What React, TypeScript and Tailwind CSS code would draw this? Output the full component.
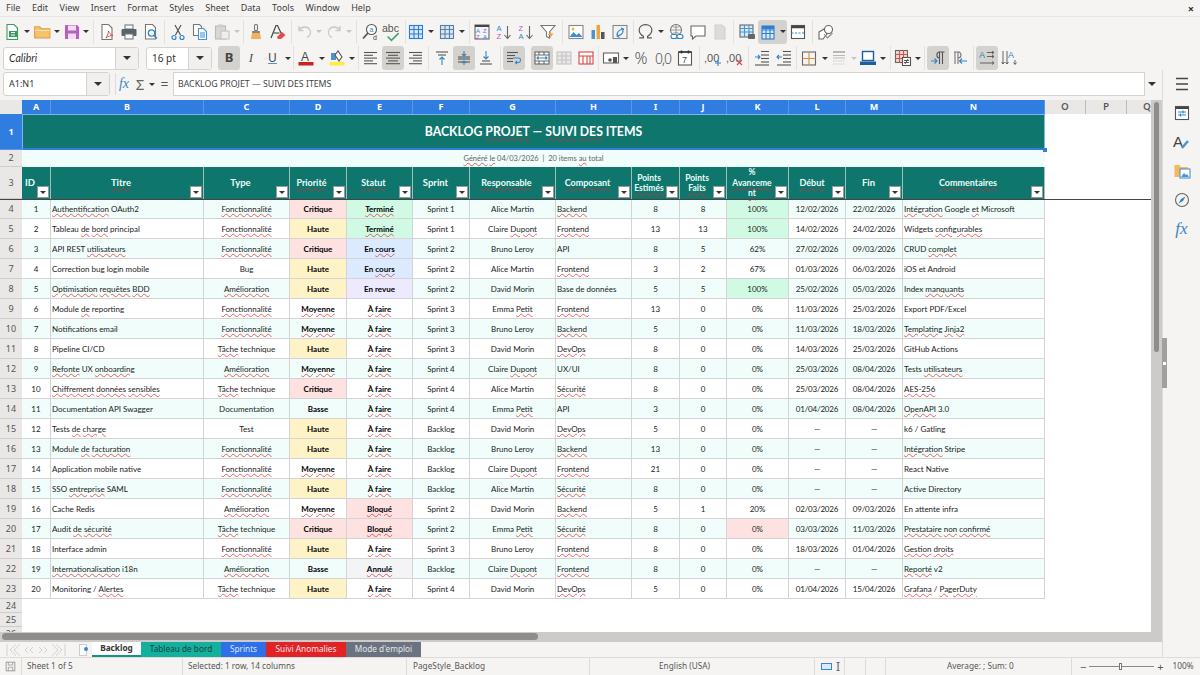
import type { ReactNode } from 'react';

const uiFont = "font-['Noto_Sans','Open_Sans',sans-serif]";
const cellFont = "font-['Lato','Noto_Sans',sans-serif]";

// column template shared by the header and every row
const cols = 'grid-cols-[29px_153px_86px_57px_66px_57px_86px_76px_48px_47px_62px_57px_57px_142px]';

const W = ({ t }: { t: string }) => (
  <span className="underline decoration-wavy decoration-[#e0262b]/70 decoration-[0.75px] [text-underline-offset:0.5px]">{t}</span>
);

// words between *stars* get the red spell-check line
function Sp({ s }: { s: string }) {
  const parts = s.split('*');
  return (
    <>
      {parts.map((p, i) => (i % 2 ? <W key={i} t={p} /> : <span key={i}>{p}</span>))}
    </>
  );
}

type Row = [string, string, string, string, string, string, string, string, string, string, string, string, string];

const F = '*Fonctionnalité*';
const T = '*Tâche* technique';
const A = '*Amélioration*';
const rows: Row[] = [
  ['*Authentification* OAuth2', F, 'Critique', '*Terminé*', 'Sprint 1', 'Alice Martin', '*Backend*', '8', '8', '100%', '12/02/2026', '22/02/2026', '*Intégration* Google *et* Microsoft'],
  ['Tableau *de* *bord* principal', F, 'Haute', '*Terminé*', 'Sprint 1', 'Claire *Dupont*', '*Frontend*', '13', '13', '100%', '14/02/2026', '24/02/2026', 'Widgets *configurables*'],
  ['API REST *utilisateurs*', F, 'Critique', 'En *cours*', 'Sprint 2', 'Bruno Leroy', 'API', '8', '5', '62%', '27/02/2026', '09/03/2026', 'CRUD *complet*'],
  ['Correction bug login mobile', 'Bug', 'Haute', 'En *cours*', 'Sprint 2', 'Alice Martin', '*Frontend*', '3', '2', '67%', '01/03/2026', '06/03/2026', 'iOS et Android'],
  ['*Optimisation* *requêtes* *BDD*', A, 'Haute', 'En revue', 'Sprint 2', 'David Morin', 'Base de données', '5', '5', '100%', '25/02/2026', '05/03/2026', 'Index *manquants*'],
  ['Module *de* reporting', F, '*Moyenne*', '*À* *faire*', 'Sprint 3', 'Emma *Petit*', '*Frontend*', '13', '0', '0%', '11/03/2026', '25/03/2026', 'Export PDF/Excel'],
  ['Notifications email', F, '*Moyenne*', '*À* *faire*', 'Sprint 3', 'Bruno Leroy', '*Backend*', '5', '0', '0%', '11/03/2026', '18/03/2026', '*Templating* *Jinja2*'],
  ['Pipeline CI/CD', T, 'Haute', '*À* *faire*', 'Sprint 3', 'David Morin', '*DevOps*', '8', '0', '0%', '14/03/2026', '25/03/2026', 'GitHub Actions'],
  ['*Refonte* UX *onboarding*', A, '*Moyenne*', '*À* *faire*', 'Sprint 4', 'Claire *Dupont*', 'UX/UI', '8', '0', '0%', '25/03/2026', '08/04/2026', 'Tests *utilisateurs*'],
  ['*Chiffrement* *données* *sensibles*', T, 'Critique', '*À* *faire*', 'Sprint 4', 'Alice Martin', '*Sécurité*', '8', '0', '0%', '25/03/2026', '08/04/2026', '*AES-256*'],
  ['Documentation API Swagger', 'Documentation', 'Basse', '*À* *faire*', 'Sprint 4', 'Emma *Petit*', 'API', '3', '0', '0%', '01/04/2026', '08/04/2026', '*OpenAPI* 3.0'],
  ['Tests *de* *charge*', 'Test', 'Haute', '*À* *faire*', 'Backlog', 'David Morin', '*DevOps*', '5', '0', '0%', '—', '—', 'k6 / Gatling'],
  ['Module *de* *facturation*', F, 'Haute', '*À* *faire*', 'Backlog', 'Bruno Leroy', '*Backend*', '13', '0', '0%', '—', '—', '*Intégration* Stripe'],
  ['Application mobile native', F, '*Moyenne*', '*À* *faire*', 'Backlog', 'Claire *Dupont*', '*Frontend*', '21', '0', '0%', '—', '—', 'React Native'],
  ['SSO *entreprise* SAML', F, 'Haute', '*À* *faire*', 'Backlog', 'Alice Martin', '*Sécurité*', '8', '0', '0%', '—', '—', 'Active Directory'],
  ['Cache Redis', A, '*Moyenne*', '*Bloqué*', 'Sprint 2', 'David Morin', '*Backend*', '5', '1', '20%', '02/03/2026', '09/03/2026', 'En attente infra'],
  ['Audit *de* *sécurité*', T, 'Critique', '*Bloqué*', 'Sprint 2', 'Emma *Petit*', '*Sécurité*', '8', '0', '0%', '03/03/2026', '11/03/2026', '*Prestataire* *non* *confirmé*'],
  ['Interface admin', F, 'Haute', '*À* *faire*', 'Sprint 3', 'Bruno Leroy', '*Frontend*', '8', '0', '0%', '18/03/2026', '01/04/2026', '*Gestion* *droits*'],
  ['*Internationalisation* i18n', A, 'Basse', '*Annulé*', 'Backlog', 'Claire *Dupont*', '*Frontend*', '8', '0', '0%', '—', '—', '*Reporté* v2'],
  ['Monitoring / *Alertes*', T, 'Haute', '*À* *faire*', 'Sprint 4', 'David Morin', '*DevOps*', '5', '0', '0%', '01/04/2026', '15/04/2026', '*Grafana* / *PagerDuty*'],
];

const prioBg: Record<string, string> = {
  Critique: 'bg-[#fee2e2]',
  Haute: 'bg-[#fef3c7]',
};
const statusBg: Record<string, string> = {
  '*Terminé*': 'bg-[#d1fae5]',
  'En *cours*': 'bg-[#dbeafe]',
  'En revue': 'bg-[#ede9fe]',
  '*Bloqué*': 'bg-[#fee2e2]',
  '*Annulé*': 'bg-[#f3f4f6]',
};

function Ic({ children, s = 18 }: { children: ReactNode; s?: number }) {
  return (
    <svg width={s} height={s} viewBox="0 0 18 18" fill="none" strokeWidth="1.1">
      {children}
    </svg>
  );
}

const Slot = ({ c, on, children }: { c: string; on?: boolean; children?: ReactNode }) => (
  <div className={`${c} h-[24px] shrink-0 flex items-center justify-center ${on ? 'bg-[#d4d2ce] rounded-[3px]' : ''}`}>{children}</div>
);
const Drop = ({ c = 'w-[10px]', off }: { c?: string; off?: boolean }) => (
  <div className={`${c} h-[24px] shrink-0 flex items-center justify-center`}>
    <div className={`w-0 h-0 border-x-[3px] border-x-transparent border-t-[3px] ${off ? 'border-t-[#c4c4c4]' : 'border-t-[#333]'}`} />
  </div>
);
const Sep = ({ c = 'w-[5px]' }: { c?: string }) => (
  <div className={`${c} h-[24px] shrink-0 flex justify-center`}>
    <div className="w-px h-full bg-[#e4e2de]" />
  </div>
);

const lines = (xs: [number, number, number][], color: string) =>
  xs.map(([a, b, y], i) => <path key={i} d={`M${a} ${y}H${b}`} stroke={color} />);

const gridIcon = (c: string, fill = 'none') => (
  <Ic>
    <rect x="2.5" y="2.5" width="13" height="13" fill={fill} stroke={c} />
    <path d="M2.5 6.5h13M2.5 11h13M7 2.5v13M11.5 2.5v13" stroke={c} />
  </Ic>
);

function Toolbar1() {
  return (
    <div className="flex h-[29px] items-center pl-[1px]">
      <Slot c="w-[21px]"><Ic><path d="M4 1.5h7l3.5 3.5v11.5H4z" fill="#fff" stroke="#3c9a5f" /><rect x="6" y="8" width="8" height="6" fill="#3c9a5f" /><path d="M8 9.5h4M8 12h4" stroke="#fff" /></Ic></Slot>
      <Drop />
      <Slot c="w-[20px]"><Ic s={19}><path d="M1.5 4.5h5l1.5 2h8v8.5h-14.500z" fill="#f6c26b" stroke="#e0a24a" /><path d="M1.500 8h14.500" stroke="#fbe0ac" /></Ic></Slot>
      <Drop />
      <Slot c="w-[19px]"><Ic><path d="M2 2h12l2 2v12H2z" fill="#b660c4" /><rect x="5" y="2.500" width="8" height="5" fill="#f2dcf5" /><rect x="5" y="10.500" width="8" height="5.500" fill="#f2dcf5" /></Ic></Slot>
      <Drop />
      <Sep />
      <Slot c="w-[22px]"><Ic><path d="M4 1.500h6.500l3.500 3.500v11.500H4z" fill="#fff" stroke="#777" /><path d="M8 15c1.500-3 2.500-5 2.500-7 .5 2 2 3.500 4.500 4.500-2.500 0-5 1-7 2.500z" stroke="#d9463e" strokeWidth=".9" /></Ic></Slot>
      <Slot c="w-[22px]"><Ic><rect x="5" y="2" width="8" height="4" fill="#fff" stroke="#777" /><rect x="1.500" y="6" width="15" height="7" rx="1" fill="#59636b" /><rect x="5" y="11" width="8" height="5" fill="#fff" stroke="#777" /></Ic></Slot>
      <Slot c="w-[22px]"><Ic><path d="M3.500 1.500h7l3 3v11.500h-10z" fill="#fff" stroke="#777" /><circle cx="9.500" cy="10" r="3.200" stroke="#2e86c9" strokeWidth="1.300" /><path d="M12 12.500l3 3" stroke="#2e86c9" strokeWidth="1.500" /></Ic></Slot>
      <Sep />
      <Slot c="w-[22px]"><Ic><path d="M6 2l5.500 10M12 2L6.500 12" stroke="#555" strokeWidth="1.200" /><circle cx="5" cy="14.500" r="2" stroke="#2e86c9" strokeWidth="1.200" /><circle cx="13" cy="14.500" r="2" stroke="#2e86c9" strokeWidth="1.200" /></Ic></Slot>
      <Slot c="w-[22px]"><Ic><path d="M2.500 1.500h6l2 2v9h-8z" fill="#fff" stroke="#777" /><path d="M7.500 5.500h5l3 3v8h-8z" fill="#fff" stroke="#4a95d0" />{lines([[9, 14, 10], [9, 14, 12], [9, 14, 14]], '#4a95d0')}</Ic></Slot>
      <Slot c="w-[22px]"><Ic><rect x="2.500" y="3" width="10" height="13" fill="#d8d8d8" stroke="#bbb" /><rect x="5" y="1.500" width="5" height="3" fill="#ccc" /><rect x="8" y="8" width="8" height="8" fill="#eee" stroke="#c4c4c4" /></Ic></Slot>
      <Drop c="w-[8px]" off />
      <Sep c="w-[4px]" />
      <Slot c="w-[22px]"><Ic><rect x="7.500" y="1.500" width="3" height="6" rx="1" stroke="#777" /><path d="M5 8h8v2H5z" fill="#888" /><path d="M5 10h8l1 6H4z" fill="#f4b15a" /></Ic></Slot>
      <Slot c="w-[22px]"><Ic><path d="M2 15L7 2.500h1.500L13 12" stroke="#444" strokeWidth="1.200" /><path d="M4.500 10h6" stroke="#444" /><path d="M8 14l5-5 3.500 3-4.500 4H9z" fill="#e8484a" /></Ic></Slot>
      <Sep />
      <Slot c="w-[21px]"><Ic><path d="M3 7c3-4 9-4 11 0 1.500 3 0 6-3 7.500M3 3v4.500h4.500" stroke="#c9c9c9" strokeWidth="1.300" /></Ic></Slot>
      <Drop c="w-[8px]" off />
      <Slot c="w-[21px]"><Ic><path d="M15 7c-3-4-9-4-11 0-1.500 3 0 6 3 7.500M15 3v4.500h-4.500" stroke="#c9c9c9" strokeWidth="1.300" /></Ic></Slot>
      <Drop off />
      <Sep />
      <Slot c="w-[22px]"><Ic><circle cx="10.500" cy="6.500" r="5" fill="#fff" stroke="#555" /><path d="M7 10l-5 5.500" stroke="#555" strokeWidth="1.800" /><text x="8.500" y="9" fontSize="7" fill="#2e86c9" fontFamily="Liberation Sans">a</text><text x="12" y="17" fontSize="7" fill="#444" fontFamily="Liberation Sans">d</text></Ic></Slot>
      <Slot c="w-[22px]"><Ic s={20}><text x="0" y="9" fontSize="9.500" fill="#555" fontFamily="Liberation Sans">abc</text><path d="M5 13l3.500 3.500L15 10" stroke="#3fa56a" strokeWidth="1.400" /></Ic></Slot>
      <Sep c="w-[4px]" />
      <Slot c="w-[18px]">{gridIcon('#2e7fd0', '#d7e8f8')}</Slot>
      <Drop c="w-[12px]" />
      <Slot c="w-[20px]">{gridIcon('#5b7f9e', '#d7e8f8')}</Slot>
      <Drop c="w-[10px]" />
      <Sep c="w-[4px]" />
      <Slot c="w-[22px]"><Ic><rect x="2" y="2" width="14" height="14" fill="#eef4fa" stroke="#666" /><path d="M2 3h14" stroke="#444" strokeWidth="2" /><text x="3" y="10" fontSize="6" fill="#2e86c9" fontFamily="Liberation Sans">A</text><text x="10" y="10" fontSize="6" fill="#c44ec9" fontFamily="Liberation Sans">Z</text><text x="3" y="15.500" fontSize="6" fill="#c44ec9" fontFamily="Liberation Sans">Z</text><text x="10" y="15.500" fontSize="6" fill="#2e86c9" fontFamily="Liberation Sans">A</text></Ic></Slot>
      <Slot c="w-[22px]"><Ic><text x="1.500" y="8" fontSize="7.500" fill="#2e86c9" fontFamily="Liberation Sans">A</text><text x="1.500" y="16" fontSize="7.500" fill="#c44ec9" fontFamily="Liberation Sans">Z</text><path d="M12.500 3v12M9.500 12l3 3.500 3-3.500" stroke="#666" /></Ic></Slot>
      <Slot c="w-[22px]"><Ic><text x="1.500" y="8" fontSize="7.500" fill="#c44ec9" fontFamily="Liberation Sans">Z</text><text x="1.500" y="16" fontSize="7.500" fill="#2e86c9" fontFamily="Liberation Sans">A</text><path d="M12.500 3v12M9.500 12l3 3.500 3-3.500" stroke="#666" /></Ic></Slot>
      <Slot c="w-[22px]"><Ic><path d="M2 2.500h14L10.500 9v6l-3-1.500V9z" fill="#fff" stroke="#777" /><path d="M12 7l-3 5h2.500l-1 4 4-5.500h-2.500z" fill="#f0a03c" /></Ic></Slot>
      <Sep c="w-[6px]" />
      <Slot c="w-[22px]"><Ic><rect x="2" y="2.500" width="14" height="13" fill="#fff" stroke="#888" /><path d="M2.500 14l4-5 3 3 2.500-2 3.500 4z" fill="#3b8fd6" /><circle cx="6" cy="6" r="1.500" fill="#f3b24a" /></Ic></Slot>
      <Slot c="w-[22px]"><Ic><rect x="2.500" y="7" width="3.500" height="9" fill="#4a95d0" /><rect x="7.500" y="2" width="3.500" height="14" fill="#f1a43c" /><rect x="12" y="9" width="3.500" height="7" fill="#555" /></Ic></Slot>
      <Slot c="w-[22px]"><Ic><rect x="2" y="2.500" width="14" height="13" fill="#f2f2f2" stroke="#888" /><path d="M6 12c0-3 2-5 6-6M10 5l2.500 1-1 2.500M12 8c0 3-2 4-5 5M8.500 14.500L6 13l1-2.500" stroke="#2e86c9" /></Ic></Slot>
      <Sep c="w-[4px]" />
      <Slot c="w-[20px]"><Ic s={19}><path d="M3 15h4v-1.500C4.500 12 3 10 3 7.500 3 4.500 5.500 2.500 9 2.500s6 2 6 5c0 2.500-1.500 4.500-4 6V15h4" stroke="#555" strokeWidth="1.100" /></Ic></Slot>
      <Drop c="w-[12px]" />
      <Slot c="w-[20px]"><Ic><circle cx="8" cy="7" r="5.500" stroke="#777" /><path d="M2.500 7h11M8 1.500v11M4.500 3.500c2 1 5 1 7 0M4.500 10.500c2-1 5-1 7 0" stroke="#777" strokeWidth=".7" /><rect x="3" y="11.500" width="6" height="4" rx="2" fill="#fff" stroke="#2e86c9" /><rect x="9" y="11.500" width="6" height="4" rx="2" fill="#fff" stroke="#2e86c9" /></Ic></Slot>
      <Slot c="w-[22px]"><Ic><path d="M2 3h14v10H7l-3.500 3v-3H2z" fill="#fff" stroke="#666" /></Ic></Slot>
      <Slot c="w-[22px]"><Ic><path d="M4 2h7l3 3v11H4z" fill="#dcdcdc" stroke="#d0d0d0" /></Ic></Slot>
      <Sep c="w-[5px]" />
      <Slot c="w-[22px]"><Ic><rect x="2" y="2" width="13" height="12" fill="#d7e8f8" stroke="#666" /><path d="M2 5.500h13M2 9h13M6.500 2v12M11 2v12" stroke="#4a95d0" /><rect x="10" y="11" width="7" height="5" rx="1" fill="#666" /></Ic></Slot>
      <div className="w-[29px] h-[24px] shrink-0 flex bg-[#d4d2ce] rounded-[3px]">
        <div className="w-[20px] flex items-center justify-center"><Ic><rect x="3" y="3" width="12" height="13" fill="#d7e8f8" stroke="#2e7fd0" /><path d="M3 7h12M3 10.500h12M7 3v13M11 3v13" stroke="#2e7fd0" /><path d="M3 3h12v3H3z" fill="#2e7fd0" /></Ic></div>
        <Drop c="w-[9px]" />
      </div>
      <Slot c="w-[22px]"><Ic><rect x="2.500" y="2.500" width="13" height="13" fill="#fff" stroke="#555" /><path d="M2.500 4h13" stroke="#444" strokeWidth="2.500" /><path d="M2.500 10h13" stroke="#2e86c9" strokeDasharray="2 1.500" /></Ic></Slot>
      <Sep c="w-[6px]" />
      <Slot c="w-[22px]"><Ic><path d="M2 9l5-3 3 5-4 5H2z" fill="#fff" stroke="#666" /><circle cx="11.500" cy="6.500" r="4" fill="#fff" stroke="#666" /><path d="M7 11l3.500 4 5-5" stroke="#888" /></Ic></Slot>
    </div>
  );
}

const LineIcon = ({ ws, c = '#555' }: { ws: [number, number][]; c?: string }) => (
  <Ic>
    {ws.map(([a, b], i) => (
      <path key={i} d={`M${a} ${3.5 + i * 2.8}H${b}`} stroke={c} />
    ))}
  </Ic>
);

function Toolbar2() {
  return (
    <div className="flex h-[24px] items-center pl-[3px]">
      <div className="w-[136px] h-[23px] shrink-0 flex border border-[#d5d3cf] rounded-[3px] bg-white">
        <div className="flex-1 px-[5px] text-[10.500px] italic leading-[21px] text-[#333] font-['Lato',sans-serif]">Calibri</div>
        <div className="w-[23px] bg-[#f1f0ee] border-l border-[#d5d3cf] flex items-center justify-center">
          <div className="w-0 h-0 border-x-[4px] border-x-transparent border-t-[4px] border-t-[#333]" />
        </div>
      </div>
      <div className="w-[7px] shrink-0" />
      <div className="w-[66px] h-[23px] shrink-0 flex border border-[#d5d3cf] rounded-[3px] bg-white">
        <div className="flex-1 px-[5px] text-[10px] leading-[21px] text-[#333]">16 pt</div>
        <div className="w-[23px] bg-[#f1f0ee] border-l border-[#d5d3cf] flex items-center justify-center">
          <div className="w-0 h-0 border-x-[4px] border-x-transparent border-t-[4px] border-t-[#333]" />
        </div>
      </div>
      <div className="w-[6px] shrink-0" />
      <Slot c="w-[22px]" on><span className="text-[13px] font-bold text-[#444]">B</span></Slot>
      <Slot c="w-[22px]"><span className="text-[13px] italic text-[#555] font-['Liberation_Serif',serif]">I</span></Slot>
      <Slot c="w-[21px]"><span className="text-[12px] text-[#444] underline decoration-[#4a95d0]">U</span></Slot>
      <Drop c="w-[9px]" />
      <Sep c="w-[3px]" />
      <Slot c="w-[22px]"><Ic><text x="4" y="12" fontSize="12" fill="#444" fontFamily="Liberation Sans">A</text><rect x="1.500" y="13" width="15" height="3.500" fill="#c9211e" /></Ic></Slot>
      <Drop c="w-[9px]" />
      <Slot c="w-[21px]"><Ic><path d="M3 4h5v7H3z" fill="#4a95d0" /><path d="M7 6l3-4 4 6-3 4z" fill="#fff" stroke="#555" /><rect x="1.500" y="13" width="15" height="3.500" fill="#ffee3d" /></Ic></Slot>
      <Drop c="w-[9px]" />
      <Sep c="w-[4px]" />
      <Slot c="w-[22px]"><LineIcon ws={[[2, 15], [2, 11], [2, 15], [2, 11], [2, 15]]} /></Slot>
      <Slot c="w-[22px]" on><LineIcon ws={[[2, 16], [4, 14], [2, 16], [4, 14], [2, 16]]} /></Slot>
      <Slot c="w-[22px]"><LineIcon ws={[[3, 16], [7, 16], [3, 16], [7, 16], [3, 16]]} /></Slot>
      <Sep c="w-[5px]" />
      <Slot c="w-[22px]"><Ic>{lines([[3, 15, 3], [5, 13, 6]], '#555')}<path d="M9 16V8M6.500 10.500L9 8l2.500 2.500" stroke="#2e86c9" /></Ic></Slot>
      <Slot c="w-[22px]" on><Ic>{lines([[3, 15, 8], [3, 15, 10], [3, 15, 13]], '#555')}<path d="M9 2v5M7 5l2 2 2-2M9 16v-4M7 14l2-2 2 2" stroke="#2e86c9" /></Ic></Slot>
      <Slot c="w-[22px]"><Ic>{lines([[5, 13, 12], [3, 15, 15]], '#555')}<path d="M9 2v8M6.500 7.500L9 10l2.500-2.500" stroke="#2e86c9" /></Ic></Slot>
      <Sep c="w-[6px]" />
      <Slot c="w-[22px]" on><Ic>{lines([[2, 13, 3.500], [2, 10, 6.500], [2, 8, 9.500], [2, 8, 12.500]], '#555')}<path d="M8 9h6c2 0 2 4 0 4.500h-3M12 12l-1.500 1.500L12 15" stroke="#2e86c9" /></Ic></Slot>
      <Slot c="w-[6px]" />
      <Slot c="w-[22px]" on><Ic><rect x="2" y="3" width="14" height="12" fill="#fff" stroke="#666" /><path d="M2 6h14M2 12h14M6 3v3M11 3v3M6 12v3M11 12v3" stroke="#666" /><path d="M4 9h10M5.500 7.500L4 9l1.500 1.500M12.500 7.500L14 9l-1.500 1.500" stroke="#2e86c9" /></Ic></Slot>
      <Slot c="w-[22px]"><Ic><rect x="2" y="3" width="14" height="12" fill="#e8e8e8" stroke="#c4c4c4" /><path d="M2 7h14M2 11h14M7 3v12M11 3v12" stroke="#c4c4c4" /></Ic></Slot>
      <Slot c="w-[22px]"><Ic><rect x="2" y="3" width="14" height="12" fill="#fff" stroke="#d9463e" /><path d="M2 7h14M6 7v8M10 7v8M13 7v8" stroke="#d9463e" /></Ic></Slot>
      <Sep c="w-[3px]" />
      <Slot c="w-[21px]"><Ic><rect x="1.500" y="4" width="15" height="10" fill="#fff" stroke="#666" /><circle cx="8" cy="11" r="1.800" fill="#555" /><rect x="11" y="8" width="4" height="6" fill="#555" /></Ic></Slot>
      <Drop c="w-[9px]" />
      <Slot c="w-[22px]"><span className="text-[16px] text-[#555] font-light">%</span></Slot>
      <Slot c="w-[22px]"><span className="text-[14px] text-[#555] font-light tracking-[-1px]">0,0</span></Slot>
      <Slot c="w-[22px]"><Ic><rect x="2.500" y="3" width="13" height="13" fill="#fff" stroke="#555" /><path d="M2.500 3h13M5.500 1.500v3M12.500 1.500v3" stroke="#333" strokeWidth="1.500" /><text x="6" y="14" fontSize="9" fill="#444" fontFamily="Liberation Sans">7</text></Ic></Slot>
      <Sep c="w-[6px]" />
      <Slot c="w-[22px]"><Ic><text x="0" y="13" fontSize="11" fill="#555" fontFamily="Liberation Sans">,00</text><path d="M14 11v6M11 14h6" stroke="#2e86c9" /></Ic></Slot>
      <Slot c="w-[22px]"><Ic><text x="0" y="13" fontSize="11" fill="#555" fontFamily="Liberation Sans">,00</text><path d="M11 11l5 5M16 11l-5 5" stroke="#d9463e" /></Ic></Slot>
      <Sep c="w-[5px]" />
      <Slot c="w-[22px]"><Ic>{lines([[8, 16, 2.500], [8, 16, 6], [8, 16, 9.500], [8, 16, 13], [2, 16, 16]], '#555')}<path d="M2 8h5M5 6l2 2-2 2" stroke="#2e86c9" /></Ic></Slot>
      <Slot c="w-[22px]"><Ic>{lines([[8, 16, 2.500], [8, 16, 6], [8, 16, 9.500], [8, 16, 13], [2, 16, 16]], '#555')}<path d="M2 8h5M4 6L2 8l2 2" stroke="#2e86c9" /></Ic></Slot>
      <Sep c="w-[3px]" />
      <Slot c="w-[22px]"><Ic><rect x="2.500" y="3" width="13" height="13" stroke="#666" /><path d="M2.500 9.500h13M9 3v13" stroke="#d98a3c" /></Ic></Slot>
      <Drop c="w-[9px]" />
      <Slot c="w-[20px]"><Ic><path d="M3 3h12" stroke="#b8b8b8" strokeWidth="2" /><path d="M3 6.500h12M3 9h12" stroke="#b8b8b8" /><path d="M3 12h12M3 15h12" stroke="#c8c8c8" strokeDasharray="1.500 1" /></Ic></Slot>
      <Drop c="w-[9px]" off />
      <Slot c="w-[20px]"><Ic><rect x="3.500" y="2.500" width="11" height="9" fill="#fff" stroke="#1d5f9e" strokeWidth="1.400" /><rect x="1" y="12.500" width="16" height="3.500" fill="#1d5f9e" /></Ic></Slot>
      <Drop c="w-[9px]" />
      <Sep c="w-[6px]" />
      <Slot c="w-[20px]"><Ic><rect x="1.500" y="1.500" width="12" height="12" fill="#f5d6d0" stroke="#666" /><path d="M1.500 5.500h12M1.500 9.500h12M5.500 1.500v12M9.500 1.500v12" stroke="#c9574a" /><rect x="8.500" y="8.500" width="8" height="8" fill="#fff" stroke="#555" /><path d="M10 11.500h5M10 13.500h5M11 15l3-5" stroke="#333" strokeWidth=".8" /></Ic></Slot>
      <Drop c="w-[9px]" />
      <Sep c="w-[5px]" />
      <Slot c="w-[22px]" on><Ic><path d="M9.500 3h6M10.500 3v12M13.500 3v12M10.500 3C7 3 7 9 10.500 9" stroke="#555" /><path d="M2 12h6M5.500 9.500L8 12l-2.500 2.500" stroke="#2e86c9" /></Ic></Slot>
      <Slot c="w-[22px]"><Ic><path d="M3 3h6M4 3v12M7 3v12M7 3C11 3 11 9 7 9" stroke="#777" /><path d="M9 12h7M11 9.500L8.500 12l2.500 2.500" stroke="#2e86c9" /></Ic></Slot>
      <Sep c="w-[5px]" />
      <Slot c="w-[22px]" on><Ic><text x="1" y="9" fontSize="9" fill="#2e86c9" fontFamily="Liberation Sans">A</text><path d="M9 3.500h7M9 7.500h7M2 14h14M14 2l2 1.500L14 5M14 6l2 1.500L14 9M14 12.500l2 1.500-2 1.500" stroke="#555" strokeWidth=".9" /></Ic></Slot>
      <Slot c="w-[22px]"><Ic><text x="8" y="9" fontSize="9" fill="#2e86c9" fontFamily="Liberation Sans">A</text><path d="M3 2v13M7 2v13M15 11v4M1.500 13L3 15l1.500-2M5.500 13L7 15l1.500-2M13.500 13.500L15 15.500l1.500-2" stroke="#555" strokeWidth=".9" /></Ic></Slot>
    </div>
  );
}

function Funnel() {
  return (
    <div className="absolute right-px bottom-px w-[12px] h-[12px] bg-white border border-[#9a9a9a] flex items-center justify-center">
      <div className="w-0 h-0 border-x-[3.500px] border-x-transparent border-t-[3.500px] border-t-[#333]" />
    </div>
  );
}

const Colhead = ({ l, c, n }: { l: string; c: string; n?: boolean }) => (
  <div className={`${c} h-full shrink-0 flex items-center justify-center text-[9px] font-bold border-r ${n ? 'border-[#bdbcb9] text-[#555] bg-[#e9e8e6]' : 'border-[#5b97e6] text-white bg-[#2f7de1]'}`}>{l}</div>
);

const RowHead = ({ n, h, blue }: { n: number; h: string; blue?: boolean }) => (
  <div className={`${h} w-[22px] shrink-0 flex items-center justify-center text-[9px] border-b ${blue ? 'bg-[#2f7de1] text-white font-bold border-[#5b97e6]' : 'bg-[#e9e8e6] text-[#555] border-[#cfcdc9]'}`}>{n}</div>
);

const heads: [string, string][] = [
  ['ID', 'justify-start pl-[3px]'],
  ['*Titre*', 'justify-center pr-[12px]'],
  ['Type', 'justify-center pr-[12px]'],
  ['*Priorité*', 'justify-center pr-[13px]'],
  ['*Statut*', 'justify-center pr-[12px]'],
  ['Sprint', 'justify-center pr-[11px]'],
  ['*Responsable*', 'justify-center pr-[12px]'],
  ['*Composant*', 'justify-center pr-[12px]'],
  ['Points\n*Estimés*', 'justify-center pr-[13px]'],
  ['Points\n*Faits*', 'justify-center pr-[12px]'],
  ['%\n*Avanceme*\n*nt*', 'justify-center pr-[11px]'],
  ['*Début*', 'justify-center pr-[10px]'],
  ['Fin', 'justify-center pr-[11px]'],
  ['*Commentaires*', 'justify-center pr-[11px]'],
];

function Grid() {
  return (
    <div className={`flex-1 min-w-0 relative bg-white overflow-hidden ${cellFont}`}>
      <div className="flex h-[14px] overflow-hidden">
        <div className="w-[22px] h-full shrink-0 bg-[#e9e8e6]" />
        <div className={`grid ${cols} shrink-0 ${uiFont}`}>
          {'ABCDEFGHIJKLMN'.split('').map((l) => (
            <Colhead key={l} l={l} c="" />
          ))}
        </div>
        <Colhead l="O" c="w-[41px]" n />
        <Colhead l="P" c="w-[41px]" n />
        <Colhead l="Q" c="w-[41px]" n />
      </div>
      <div className="flex">
        <div className={`shrink-0 w-[22px] ${uiFont}`}>
          <RowHead n={1} h="h-[36px]" blue />
          <RowHead n={2} h="h-[17px]" />
          <RowHead n={3} h="h-[32px]" />
          {rows.map((_, i) => (
            <RowHead key={i} n={i + 4} h="h-[20px]" />
          ))}
          <RowHead n={24} h="h-[14px]" />
          <RowHead n={25} h="h-[14px]" />
          <RowHead n={26} h="h-[14px]" />
        </div>
        <div className="shrink-0 w-[1023px]">
          <div className="h-[36px] pt-[1px] bg-[#0f766e] border border-[#7fb5ee] border-b-[2px] border-b-[#2f7de1] flex items-center justify-center text-white font-bold text-[12.250px]">
            <span><Sp s="BACKLOG *PROJET* — *SUIVI* *DES* ITEMS" /></span>
          </div>
          <div className="h-[17px] bg-[#f0fdfa] flex items-center justify-center text-[7.500px] text-[#666] whitespace-pre">
            <span><Sp s="*Généré* *le* 04/03/2026  |  20 items *au* total" /></span>
          </div>
          <div className={`grid ${cols} h-[32px] bg-[#0f766e] text-[#ecfdf9] font-bold`}>
            {heads.map(([h, align], i) => (
              <div key={i} className={`relative flex items-center ${align} border-r border-[#9ebfba] text-center whitespace-pre-line ${i >= 8 && i <= 10 ? 'text-[8.500px] leading-[10.500px]' : i <= 2 || i === 5 || i === 12 ? 'text-[9.500px]' : 'text-[9px]'}`}>
                <span><Sp s={h} /></span>
                <Funnel />
              </div>
            ))}
          </div>
          {rows.map((r, i) => {
            const band = i % 2 === 0 ? 'bg-[#f0fdfa]' : 'bg-white';
            const kBg = r[9] === '100%' ? 'bg-[#d1fae5]' : i === 16 ? 'bg-[#fee2e2]' : '';
            return (
              <div key={i} className={`grid ${cols} h-[20px] ${band} text-[8px] text-[#222] border-b border-[#d4d4d4]`}>
                <div className="border-r border-[#d4d4d4] flex items-center justify-center">{i + 1}</div>
                <div className="border-r border-[#d4d4d4] flex items-center pl-px whitespace-nowrap"><span><Sp s={r[0]} /></span></div>
                <div className="border-r border-[#d4d4d4] flex items-center justify-center"><span><Sp s={r[1]} /></span></div>
                <div className={`border-r border-[#d4d4d4] flex items-center justify-center font-bold text-black ${prioBg[r[2]] ?? ''}`}><span><Sp s={r[2]} /></span></div>
                <div className={`border-r border-[#d4d4d4] flex items-center justify-center font-bold text-black ${statusBg[r[3]] ?? ''}`}><span><Sp s={r[3]} /></span></div>
                <div className="border-r border-[#d4d4d4] flex items-center justify-center">{r[4]}</div>
                <div className="border-r border-[#d4d4d4] flex items-center justify-center"><span><Sp s={r[5]} /></span></div>
                <div className="border-r border-[#d4d4d4] flex items-center pl-px whitespace-nowrap"><span><Sp s={r[6]} /></span></div>
                <div className="border-r border-[#d4d4d4] flex items-center justify-center">{r[7]}</div>
                <div className="border-r border-[#d4d4d4] flex items-center justify-center">{r[8]}</div>
                <div className={`border-r border-[#d4d4d4] flex items-center justify-center ${kBg}`}>{r[9]}</div>
                <div className="border-r border-[#d4d4d4] flex items-center justify-center tracking-[-0.2px]">{r[10]}</div>
                <div className="border-r border-[#d4d4d4] flex items-center justify-center tracking-[-0.2px]">{r[11]}</div>
                <div className="border-r border-[#d4d4d4] flex items-center pl-px whitespace-nowrap"><span><Sp s={r[12]} /></span></div>
              </div>
            );
          })}
        </div>
      </div>
      {/* frozen pane line under row 3 */}
      <div className="absolute left-0 right-0 top-[99px] h-px bg-[#444]" />
      <div className="absolute left-[1043px] top-[48px] w-[4px] h-[4px] bg-[#2f7de1]" />
    </div>
  );
}

const Tab = ({ c, children }: { c: string; children: ReactNode }) => (
  <div className={`${c} h-full flex items-center justify-center text-[8.250px] shrink-0`}>{children}</div>
);

const StatusCell = ({ c, children }: { c: string; children?: ReactNode }) => (
  <div className={`${c} h-full shrink-0 flex items-center border-r border-[#dedcd8] text-[#555]`}>{children}</div>
);

const SheetNav = () => (
  <svg width="60" height="14" viewBox="0 0 60 14" fill="none" stroke="#d2d1ce" strokeWidth="1">
    <path d="M1 1v12M10 1.500L4 7l6 5.500M14 1.500L8 7l6 5.500" />
    <path d="M22 4l-3 3 3 3M27 4l-3 3 3 3M33 4l3 3-3 3M38 4l3 3-3 3" />
    <path d="M46 1.500l6 5.500-6 5.500M50 1.500l6 5.500-6 5.500M59 1v12" />
  </svg>
);

export default function App() {
  return (
    <div className={`w-[1200px] h-[675px] overflow-hidden flex flex-col bg-[#f5f4f2] text-[#333] ${uiFont}`}>
      <div className="h-[17px] shrink-0 flex items-center border-b border-[#e8e6e3] text-[9px] text-[#3d3d3d]">
        <div className="flex-1 flex gap-[11.500px] pl-[6px]">
          {['File', 'Edit', 'View', 'Insert', 'Format', 'Styles', 'Sheet', 'Data', 'Tools', 'Window', 'Help'].map((m) => (
            <span key={m}>{m}</span>
          ))}
        </div>
        <span className="pr-[6px] text-[11px] font-bold leading-none text-[#333]">×</span>
      </div>
      <Toolbar1 />
      <Toolbar2 />
      <div className="flex flex-1 min-h-0">
        <div className="flex-1 min-w-0 flex flex-col">
          <div className="h-[28px] shrink-0 flex items-center pl-[3px]">
            <div className="w-[107px] h-[24px] shrink-0 flex border border-[#d5d3cf] rounded-[3px] bg-white">
              <div className="flex-1 px-[5px] text-[9px] leading-[22px]">A1:N1</div>
              <div className="w-[23px] bg-[#f1f0ee] border-l border-[#d5d3cf] flex items-center justify-center">
                <div className="w-0 h-0 border-x-[4px] border-x-transparent border-t-[4px] border-t-[#333]" />
              </div>
            </div>
            <div className="w-[5px] shrink-0" />
            <div className="w-px h-[22px] shrink-0 bg-[#dedcd8]" />
            <div className="w-[16px] shrink-0 text-center text-[14px] italic leading-none text-[#3b86c9] font-['Liberation_Serif',serif]">fx</div>
            <div className="w-[16px] shrink-0 text-center text-[15px] leading-none text-[#666]">Σ</div>
            <Drop c="w-[8px]" />
            <div className="w-[17px] shrink-0 text-center text-[14px] leading-none text-[#555]">=</div>
            <div className="w-[972px] h-[24px] shrink-0 bg-white border border-[#d5d3cf] px-[4px] text-[8.750px] leading-[22px] text-[#444]">BACKLOG PROJET — SUIVI DES ITEMS</div>
            <div className="w-[14px] shrink-0 flex justify-center"><div className="w-0 h-0 border-x-[4px] border-x-transparent border-t-[4px] border-t-[#333]" /></div>
          </div>
          <div className="h-[2px] shrink-0" />
          <div className="flex flex-1 min-h-0">
            <Grid />
            <div className="w-[11px] shrink-0 relative bg-[#cccbc9]">
              <div className="absolute left-[3px] top-[2px] w-[5px] h-[250px] bg-[#8e8d8b] rounded-full" />
            </div>
          </div>
          <div className="h-[10px] shrink-0 bg-[#cccbc9] pl-[2px] pt-[1px]">
            <div className="h-[7px] w-[536px] bg-[#8e8d8b] rounded-full" />
          </div>
          <div className="h-[15px] shrink-0 flex">
            <div className="w-[74px] shrink-0 flex items-center pl-[6px]"><SheetNav /></div>
            <div className="w-[18px] shrink-0 flex items-center justify-center relative">
              <div className="w-[8px] h-[12px] bg-white border border-[#ccc]" />
              <div className="absolute left-[10px] top-[5px] w-[4px] h-[4px] rounded-full bg-[#3b86c9]" />
            </div>
            <Tab c="w-[49px] bg-white font-bold text-[#333] border-b-2 border-[#0f9488]">Backlog</Tab>
            <Tab c="w-[80px] bg-[#14b09e] text-[#17453f]">Tableau de bord</Tab>
            <Tab c="w-[45px] bg-[#2f6fe8] text-[#dbe8ff]">Sprints</Tab>
            <Tab c="w-[80px] bg-[#e22326] text-[#ffe4e4]">Suivi Anomalies</Tab>
            <Tab c="w-[75px] bg-[#6b7280] text-[#e5e7eb]">Mode d'emploi</Tab>
          </div>
        </div>
        <div className="w-[38px] shrink-0 border-l border-[#dedcd8] flex flex-col items-center pt-[5px] gap-[11px] relative">
          <Ic><path d="M3 3.500h12M3 9h12M3 14.500h12" stroke="#444" strokeWidth="1.600" /></Ic>
          <Ic><rect x="2.500" y="2.500" width="13" height="13" fill="#fff" stroke="#555" /><path d="M2.500 4h13" stroke="#444" strokeWidth="2" /><path d="M5 8h8M5 11h8M10 6.500v3M7.500 9.500v3" stroke="#2e86c9" /></Ic>
          <Ic><text x="0" y="14" fontSize="15" fill="#444" fontFamily="Liberation Sans">A</text><path d="M9 15l6-7" stroke="#4a95d0" strokeWidth="2.500" /></Ic>
          <Ic><path d="M1.500 3h5l1.500 2h7v2H1.500z" fill="#f4b860" /><path d="M1.500 5v10h8V5z" fill="#f4b860" /><rect x="7" y="7" width="10" height="9" fill="#fff" stroke="#4a95d0" /><path d="M8 15l3-4 2 2 1-1 2 3z" fill="#4a95d0" /></Ic>
          <Ic><circle cx="9" cy="9" r="6.500" stroke="#666" /><path d="M12.500 5.500L10 10 5.500 12.500 8 8z" fill="#2e86c9" /></Ic>
          <div className="h-[18px] text-[17px] italic leading-none text-[#3b86c9] font-['Liberation_Serif',serif]">fx</div>
          <div className="absolute -left-px top-[268px] w-[5px] h-[50px] bg-[#a0a0a0] flex items-center justify-center">
            <div className="w-[3px] h-[3px] bg-white" />
          </div>
        </div>
      </div>
      <div className="h-[18px] shrink-0 flex items-center border-t border-[#dedcd8] text-[8.250px]">
        <StatusCell c="w-[22px] justify-center"><Ic s={13}><rect x="3" y="3" width="12" height="12" stroke="#999" strokeWidth="1.300" /><path d="M6 3v4h6V3M6 15v-5h6v5" stroke="#999" /></Ic></StatusCell>
        <StatusCell c="w-[161px] pl-[5px]">Sheet 1 of 5</StatusCell>
        <StatusCell c="w-[224px] pl-[5px]">Selected: 1 row, 14 columns</StatusCell>
        <StatusCell c="w-[183px] pl-[6px]">PageStyle_Backlog</StatusCell>
        <StatusCell c="w-[225px] pl-[69px]">English (USA)</StatusCell>
        <StatusCell c="w-[30px] pl-[6px]"><div className="w-[11px] h-[7px] border border-[#3b86c9] bg-[#dbeafe] mr-[4px]" /><span className="text-[12px] text-[#666] leading-none">I</span></StatusCell>
        <StatusCell c="w-[21px]" />
        <StatusCell c="w-[20px]" />
        <StatusCell c="w-[186px] pl-[61px]">Average: ; Sum: 0</StatusCell>
        <div className="flex-1 flex items-center pl-[8px] gap-[3px] text-[#555]">
          <span className="text-[11px] leading-none">−</span>
          <div className="w-[65px] h-px shrink-0 bg-[#888] relative"><div className="absolute left-[30px] -top-[3px] w-[3px] h-[7px] bg-white border border-[#777]" /></div>
          <span className="text-[11px] leading-none">+</span>
          <span className="ml-[6px]">100%</span>
        </div>
      </div>
    </div>
  );
}
